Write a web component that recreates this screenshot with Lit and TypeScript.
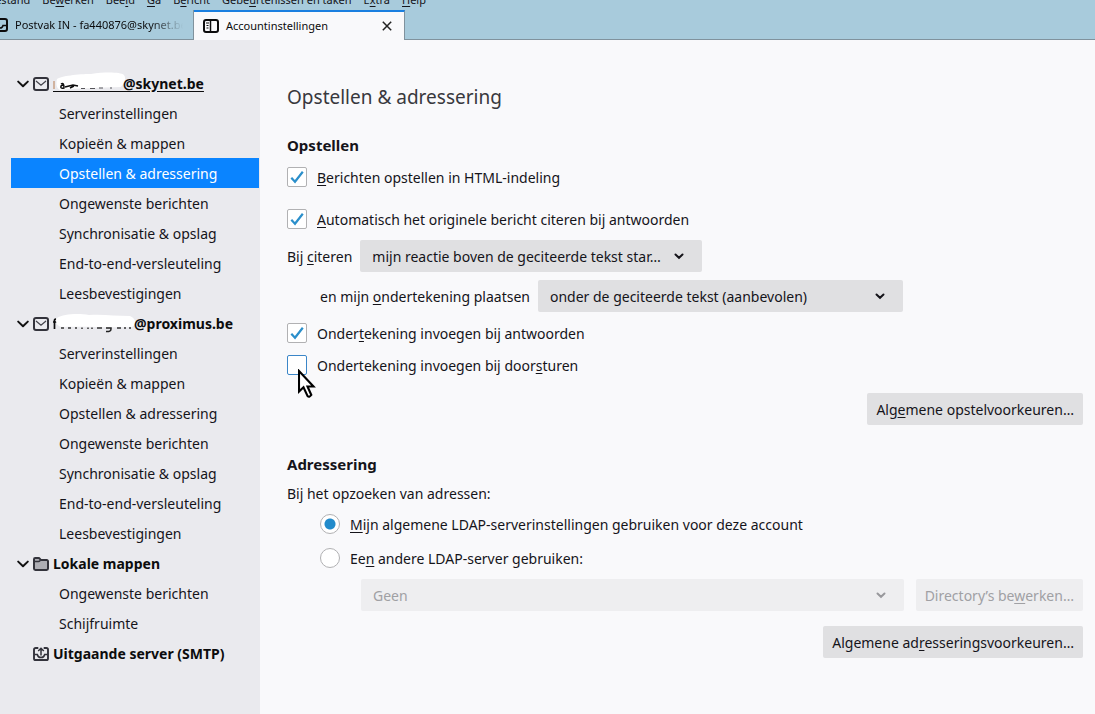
import { LitElement, html, css, svg, nothing } from "lit";
import { customElement, property } from "lit/decorators.js";

const accountPages = [
  "Serverinstellingen",
  "Kopieën & mappen",
  "Opstellen & adressering",
  "Ongewenste berichten",
  "Synchronisatie & opslag",
  "End-to-end-versleuteling",
  "Leesbevestigingen",
];

/* "_" precedes the access key of a label. */
function keyed(text: string) {
  const i = text.indexOf("_");
  if (i < 0) return html`${text}`;
  return html`${text.slice(0, i)}<u>${text[i + 1]}</u>${text.slice(i + 2)}`;
}

const chevron = html`<svg class="twisty" width="12" height="8" viewBox="0 0 12 8">
  <path d="M1.2 1.6 6 6.2 10.8 1.6" fill="none" stroke="#111" stroke-width="2" stroke-linecap="round" stroke-linejoin="round" />
</svg>`;

const icons = {
  mail: svg`<rect x="1" y="2" width="14" height="12" rx="2" fill="none" stroke="#33333b" stroke-width="2"/><path d="M3.3 5.2 8 9.2l4.7-4" fill="none" stroke="#44444c" stroke-width="1.2" stroke-linecap="round"/>`,
  folder: svg`<path d="M1 12.6V3.2A1.2 1.2 0 0 1 2.2 2h3.3c1 0 1.2.5 1.7 1.2.3.5.7.8 1.3.8h5.3A1.2 1.2 0 0 1 15 5.2v7.4a1.4 1.4 0 0 1-1.4 1.4H2.4A1.4 1.4 0 0 1 1 12.6z" fill="#aeaeb4" stroke="#33333b" stroke-width="2"/><path d="M1.5 5.5h4c1 0 1.3-.5 2-1.3" fill="none" stroke="#33333b" stroke-width="1.3"/>`,
  outgoing: svg`<path d="M5.3 2H2.6A1.6 1.6 0 0 0 1 3.6v8.8A1.6 1.6 0 0 0 2.6 14h10.8a1.6 1.6 0 0 0 1.6-1.6V3.6A1.6 1.6 0 0 0 13.4 2h-2.7" fill="none" stroke="#33333b" stroke-width="1.9"/><path d="M8 9.5V2.4M5.2 5 8 2.2 10.8 5M1.5 8.5h2.8c.5 2.7 1.8 3 3.7 3s3.200-.3 3.700-3h2.800" fill="none" stroke="#33333b" stroke-width="1.5"/>`,
};

@customElement("account-node")
class AccountNode extends LitElement {
  @property() icon: keyof typeof icons = "mail";
  @property({ type: Boolean }) leaf = false;

  static styles = css`
    :host { display: flex; align-items: center; height: 30px; padding-left: 17px; font-weight: 700; color: #0c0c0d; }
    .twisty, .gap { width: 12px; margin-right: 4px; flex: none; }
    .icon { flex: none; margin-right: 4px; }
  `;

  render() {
    return html`${this.leaf ? html`<span class="gap"></span>` : chevron}
      <svg class="icon" width="16" height="16" viewBox="0 0 16 16">${icons[this.icon]}</svg>
      <slot></slot>`;
  }
}

@customElement("app-root")
class AppRoot extends LitElement {
  static styles = css`
    :host {
      display: flex; flex-direction: column; min-height: 100vh; overflow: hidden;
      font: 14px/20px "Noto Sans", "Open Sans", sans-serif; color: #15141a; background: #f9f9fb;
    }
    * { box-sizing: border-box; }
    u { text-decoration: underline; text-underline-offset: 2px; }
    .menubar {
      display: flex; align-items: flex-end; gap: 12px; height: 10px; overflow: hidden; padding-bottom: 2px;
      margin-left: -12px; font-size: 11px; line-height: 16px; white-space: nowrap;
    }
    .chrome { background: #a8cbdc; overflow: hidden; flex: none; }
    .tabs { display: flex; height: 30px; font-size: 11px; }
    .tab { display: flex; align-items: center; border: 0; border-bottom: 1px solid #80929d; background: none; font: inherit; color: #0c0c0d; padding: 0; text-align: left; white-space: nowrap; }
    .inbox { width: 194px; border-right: 1px solid #80929d; padding-top: 1px; padding-right: 10px; overflow: hidden; }
    .inbox svg { flex: none; margin-left: -8px; margin-right: 7px; }
    .fade { overflow: hidden; flex: 1; -webkit-mask-image: linear-gradient(to left, transparent, #000 32px); mask-image: linear-gradient(to left, transparent, #000 32px); }
    .current { width: 211px; background: #f9f9fb; border-top: 2px solid #1a7fe0; border-bottom: 0; border-right: 1px solid #80929d; padding: 0 12px 0 9px; }
    .current span { flex: 1; padding-left: 7px; }
    .rest { flex: 1; border-bottom: 1px solid #80929d; }
    .body { display: flex; flex: 1; }
    nav { width: 260px; flex: none; background: #eaeaee; padding: 28px 1px 0 0; white-space: nowrap; }
    .page { display: flex; align-items: center; height: 30px; margin-left: 11px; padding: 1px 0 0 48px; color: #15141a; text-decoration: none; }
    .on { background: #0a84ff; color: #fff; }
    account-node { padding-top: 1px; box-sizing: border-box; }
    .name { display: flex; position: relative; }
    .name.focus { text-decoration: underline; text-underline-offset: 2px; }
    .erased { width: 70px; height: 20px; overflow: visible; }
    .erased.wide { width: 81px; }
    main { flex: 1; min-width: 0; padding: 41px 12px 30px 27px; }
    h1 { font-size: 19px; line-height: 32px; font-weight: 400; margin: 0 0 22px; color: #38383d; }
    h2 { font-size: 15px; line-height: 20px; font-weight: 700; margin: 0; }
    label { padding-top: 1px; }
    section + section { margin-top: 29px; }
    .row { display: flex; align-items: center; }
    .check { gap: 10px; height: 20px; position: relative; }
    .mt8 { margin-top: 8px; } .mt10 { margin-top: 10px; } .mt11 { margin-top: 11px; } .mt12 { margin-top: 12px; }
    .mt14 { margin-top: 14px; } .mt15 { margin-top: 15px; } .mt18 { margin-top: 18px; } .mt22 { margin-top: 22px; }
    .end { justify-content: flex-end; }
    .indent { padding-left: 33px; }
    .deep { padding-left: 74px; gap: 12px; }
    input { appearance: none; flex: none; width: 20px; height: 20px; margin: 0; border: 1px solid #b1b1b3; border-radius: 2px; background: #fff center / 18px 18px no-repeat; }
    input[type="checkbox"]:checked { background-image: url("data:image/svg+xml,%3Csvg xmlns='http://www.w3.org/2000/svg' viewBox='0 0 18 18'%3E%3Cpath d='M3.3 9.8 7 13.8 14.8 3.8' fill='none' stroke='%232b8fcb' stroke-width='2.2'/%3E%3C/svg%3E"); }
    input[type="radio"] { border-radius: 50%; }
    input[type="radio"]:checked { background-image: radial-gradient(circle, #228bcb 5px, transparent 6px); }
    .hover { border-color: #3b86c8; }
    .pick { position: relative; display: flex; }
    .pick svg { position: absolute; right: 18px; top: 13px; pointer-events: none; }
    select, .btn { font: inherit; color: inherit; height: 32px; border: 0; border-radius: 2px; background: #e0e0e2; }
    select { appearance: none; padding: 1px 36px 0 12px; width: 100%; }
    .btn { padding: 1px 9px 0; white-space: nowrap; }
    .reply { width: 342px; margin-left: 8px; }
    .sign { width: 365px; margin-left: 8px; }
    .grow { flex: 1; }
    :disabled { background: #eeeef0; color: #a0a0a4; opacity: 1; }
    .cursor { position: absolute; left: 11px; top: 14px; pointer-events: none; }
  `;

  private pages(list: string[], active = "") {
    return list.map(p => html`<a class="page ${p === active ? "on" : ""}" href="#" aria-current=${p === active ? "page" : nothing}>${p}</a>`);
  }

  private check(id: string, text: string, gap: string, on = true) {
    return html`<div class="row check ${gap}">
      <input id=${id} type="checkbox" class=${on ? "" : "hover"} .checked=${on} /><label for=${id}>${keyed(text)}</label>
      ${on ? nothing : html`<svg class="cursor" width="18" height="30" viewBox="0 0 18 30" aria-hidden="true">
        <path d="M1 2V22.5l4.500-4.300 4 8.800q1.800 1.800 3.800-1L9.500 17.500H15.500z" fill="#fff" stroke="#000" stroke-width="2.100" stroke-linejoin="miter"/></svg>`}
    </div>`;
  }

  private radio(id: string, text: string, gap: string, on = false) {
    return html`<div class="row check indent ${gap}"><input id=${id} name="ldap" type="radio" .checked=${on} /><label for=${id}>${keyed(text)}</label></div>`;
  }

  private pick(id: string, text: string, cls: string, off = false) {
    return html`<div class="pick ${cls}"><select id=${id} aria-label=${id === "server" ? "LDAP-server" : nothing} ?disabled=${off}><option>${text}</option></select>
      <svg width="10" height="7" viewBox="0 0 10 7"><path d="M1.5 1.5 5 4.8 8.5 1.5" fill="none" stroke=${off ? "#98989c" : "#15141a"} stroke-width="2" stroke-linecap="round"/></svg></div>`;
  }

  render() {
    return html`
      <header class="chrome">
        <div class="menubar">
          ${["_Bestand", "Be_werken", "Bee_ld", "_Ga", "B_ericht", "Gebe_urtenissen en taken", "E_xtra", "_Help"].map(m => html`<span>${keyed(m)}</span>`)}
        </div>
        <div class="tabs">
          <button class="tab inbox">
            <svg width="16" height="16" viewBox="0 0 16 16"><rect x="1" y="2" width="14" height="12" rx="2" fill="none" stroke="#0c0c0d" stroke-width="2"/><path d="M2 8.5h3q.5 2.5 3 2.5t3-2.5h3" fill="none" stroke="#0c0c0d" stroke-width="1.5"/></svg>
            <span class="fade">Postvak IN - fa440876@skynet.be</span>
          </button>
          <button class="tab current">
            <svg width="16" height="16" viewBox="0 0 16 16"><rect x="1" y="2" width="14" height="12" rx="2" fill="none" stroke="#0c0c0d" stroke-width="2"/><path d="M7.5 2v12" stroke="#0c0c0d" stroke-width="1.5"/><path d="M3 5h3M3.5 7.5h2M3.5 10h2" stroke="#0c0c0d"/></svg>
            <span>Accountinstellingen</span>
            <svg width="10" height="10" viewBox="0 0 10 10"><path d="M.8.8l8.4 8.4M9.2.8.8 9.2" stroke="#222" stroke-width="1.5"/></svg>
          </button>
          <div class="rest"></div>
        </div>
      </header>
      <div class="body">
        <nav>
          <account-node><span class="name focus">
            <svg class="erased" viewBox="0 0 70 20" aria-hidden="true">
              <path d="M0 17.5h70" stroke="#0c0c0d"/><path d="M1 7v8" stroke="#c9a184" stroke-width="1.5"/>
              <path d="M4 5C8 2 25 0 38 0 52-2 67-2 71 1c3 5-1 9-3 12-20 1-44 1-61 3-4-2-4-7-3-11z" fill="#fff"/>
              <path d="M8 10q3-2 3 4-4 1-3-2 1-1 3-1M12 13l8-2 5 1M17 14l4-2" fill="none" stroke="#0c0c0d" stroke-width="1.5"/>
              <path d="M28 14.5h4M37 14.5h5M46 14h4M57 14h2" stroke="#55555a"/>
            </svg>@skynet.be</span></account-node>
          ${this.pages(accountPages, "Opstellen & adressering")}
          <account-node><span class="name">
            <svg class="erased wide" viewBox="0 0 81 20" aria-hidden="true">
              <path d="M3 5q-2 0-1.5 3v7M0 8h4" fill="none" stroke="#0c0c0d" stroke-width="1.7"/>
              <path d="M4 4C10 0 25-1 36 1c14-1 26 1 41 1 7 3 6 9 2 11-20 1-50-1-70 0-6-1-7-6-5-9z" fill="#fff"/>
              <path d="M8 14h3M15 14h3M22 14h2M29 13.5v1.5M35 13.5v1.5M39 13.5v1.5M44 14h5M64 14h4M72 13v2M77 13v2" fill="none" stroke="#333" stroke-width="1.5"/><path d="M53 14h5v1q0 3-5 2.500" fill="none" stroke="#222" stroke-width="1.5"/>
            </svg>@proximus.be</span></account-node>
          ${this.pages(accountPages)}
          <account-node icon="folder">Lokale mappen</account-node>
          ${this.pages(["Ongewenste berichten", "Schijfruimte"])}
          <account-node icon="outgoing" leaf>Uitgaande server (SMTP)</account-node>
        </nav>
        <main>
          <h1>Opstellen &amp; adressering</h1>
          <section>
            <h2>Opstellen</h2>
            ${this.check("html", "_Berichten opstellen in HTML-indeling", "mt12")}
            ${this.check("quote", "_Automatisch het originele bericht citeren bij antwoorden", "mt22")}
            <div class="row mt11"><label for="reply">Bij <u>c</u>iteren</label>${this.pick("reply", "mijn reactie boven de geciteerde tekst star…", "reply")}</div>
            <div class="row indent mt8"><label for="sign">en mijn <u>o</u>ndertekening plaatsen</label>${this.pick("sign", "onder de geciteerde tekst (aanbevolen)", "sign")}</div>
            ${this.check("sigreply", "Onder_tekening invoegen bij antwoorden", "mt11")}
            ${this.check("sigfwd", "Ondertekening invoegen bij door_sturen", "mt12", false)}
            <div class="row end mt18"><button class="btn">Alg<u>e</u>mene opstelvoorkeuren…</button></div>
          </section>
          <section>
            <h2>Adressering</h2>
            <div class="mt10">Bij het opzoeken van adressen:</div>
            ${this.radio("global", "_Mijn algemene LDAP-serverinstellingen gebruiken voor deze account", "mt10", true)}
            ${this.radio("other", "Ee_n andere LDAP-server gebruiken:", "mt14")}
            <div class="row deep mt11">${this.pick("server", "Geen", "grow", true)}<button class="btn" disabled>Directory’s be<u>w</u>erken…</button></div>
            <div class="row end mt15"><button class="btn">Algemene ad<u>r</u>esseringsvoorkeuren…</button></div>
          </section>
        </main>
      </div>`;
  }
}
